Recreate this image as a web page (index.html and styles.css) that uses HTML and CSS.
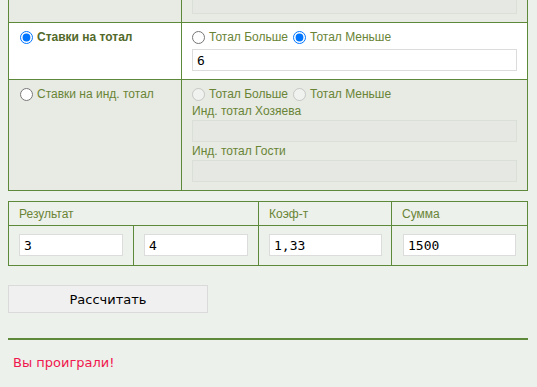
FILE: index.html
```html
<!DOCTYPE html>
<html lang="ru">
<head>
    <meta charset="UTF-8">
    <meta name="viewport" content="width=device-width, initial-scale=1.0">
    <title>Калькулятор ставок</title>
    <link rel="stylesheet" href="styles.css">
</head>
<body>
    <div class="page">
        <table class="bets">
            <tr class="row-gray row-cut">
                <td class="bet-type"></td>
                <td class="bet-opts">
                    <input type="text" class="field" disabled />
                </td>
            </tr>
            <tr class="row-active">
                <td class="bet-type">
                    <label class="type-label active">
                        <input type="radio" name="betType" checked />
                        Ставки на тотал
                    </label>
                </td>
                <td class="bet-opts">
                    <div class="opt-line">
                        <label><input type="radio" name="total" /> Тотал Больше</label>
                        <label><input type="radio" name="total" checked /> Тотал Меньше</label>
                    </div>
                    <input type="text" class="field" value="6" />
                </td>
            </tr>
            <tr class="row-gray">
                <td class="bet-type">
                    <label class="type-label">
                        <input type="radio" name="betType" />
                        Ставки на инд. тотал
                    </label>
                </td>
                <td class="bet-opts">
                    <div class="opt-line">
                        <label><input type="radio" name="indTotal" disabled /> Тотал Больше</label>
                        <label><input type="radio" name="indTotal" disabled /> Тотал Меньше</label>
                    </div>
                    <div class="field-label">Инд. тотал Хозяева</div>
                    <input type="text" class="field" disabled />
                    <div class="field-label">Инд. тотал Гости</div>
                    <input type="text" class="field" disabled />
                </td>
            </tr>
        </table>

        <table class="result">
            <colgroup>
                <col class="w-res">
                <col class="w-res">
                <col class="w-coef">
                <col>
            </colgroup>
            <tr class="head">
                <td colspan="2">Результат</td>
                <td>Коэф-т</td>
                <td>Сумма</td>
            </tr>
            <tr>
                <td class="c1"><input type="text" class="field" value="3" /></td>
                <td class="c2"><input type="text" class="field" value="4" /></td>
                <td class="c3"><input type="text" class="field" value="1,33" /></td>
                <td class="c4"><input type="text" class="field" value="1500" /></td>
            </tr>
        </table>

        <button class="calc">Рассчитать</button>

        <hr class="divider">

        <p class="outcome">Вы проиграли!</p>
    </div>
</body>
</html>
```

FILE: styles.css
```css
body {
    margin: 0;
    background: #edf1eb;
    font-family: 'Liberation Sans', Arial, sans-serif;
    font-size: 12px;
    color: #6a8436;
}

.page {
    width: 520px;
    margin: 0 0 0 8px;
}

table {
    border-collapse: collapse;
    width: 520px;
}

td {
    border: 1px solid #5d8a3a;
    vertical-align: top;
}

/* top table, page is scrolled a little */
.bets {
    margin-top: -27px;
}

.bets td {
    padding: 6px 10px 8px;
}

.bets .bet-type {
    width: 151px;
    padding-left: 11px;
}

.row-gray {
    background: #e7ebe4;
}

.row-active {
    background: #ffffff;
}

.row-cut td {
    padding-top: 14px;
}

.type-label {
    display: flex;
    align-items: center;
    line-height: 16px;
}

.type-label.active {
    font-weight: bold;
    color: #52692a;
}

input[type="radio"] {
    width: 13px;
    height: 13px;
    margin: 0 4px 0 0;
}

.opt-line {
    display: flex;
    gap: 5px;
    line-height: 16px;
}

.opt-line label {
    display: flex;
    align-items: center;
}

.field {
    display: block;
    box-sizing: border-box;
    width: 100%;
    height: 22px;
    margin: 4px 0 0;
    padding: 1px 4px 0;
    border: 1px solid #dcdcdc;
    background: #ffffff;
    font-family: 'DejaVu Sans Mono', monospace;
    font-size: 13px;
    color: #000000;
    outline: none;
}

.field:disabled {
    background: #e6e9e3;
    border-color: #dadfd7;
}

.field-label {
    line-height: 16px;
    margin-top: 1px;
}

.field-label + .field {
    margin-top: 1px;
}

/* result table */
.result {
    margin-top: 10px;
    table-layout: fixed;
}

.w-res {
    width: 125px;
}

.w-coef {
    width: 133px;
}

.result .head td {
    height: 24px;
    padding: 0 10px;
    vertical-align: middle;
    box-sizing: border-box;
}

.result td {
    padding: 8px 10px 9px;
}

.result .c3 {
    padding-right: 9px;
}

.result .c4 {
    padding: 8px 11px 9px;
}

.result .field {
    margin: 0;
    height: 22px;
}

.calc {
    display: block;
    width: 200px;
    height: 28px;
    margin-top: 19px;
    background: #f0f0f0;
    border: 1px solid #dadada;
    font-family: 'DejaVu Sans', Verdana, sans-serif;
    font-size: 13px;
    color: #000000;
}

.divider {
    margin: 25px 0 0;
    border: none;
    height: 2px;
    background: #5d8a3a;
}

.outcome {
    margin: 15px 0 0 5px;
    font-family: 'DejaVu Sans', Verdana, sans-serif;
    font-size: 13px;
    color: #f0174e;
}
```
